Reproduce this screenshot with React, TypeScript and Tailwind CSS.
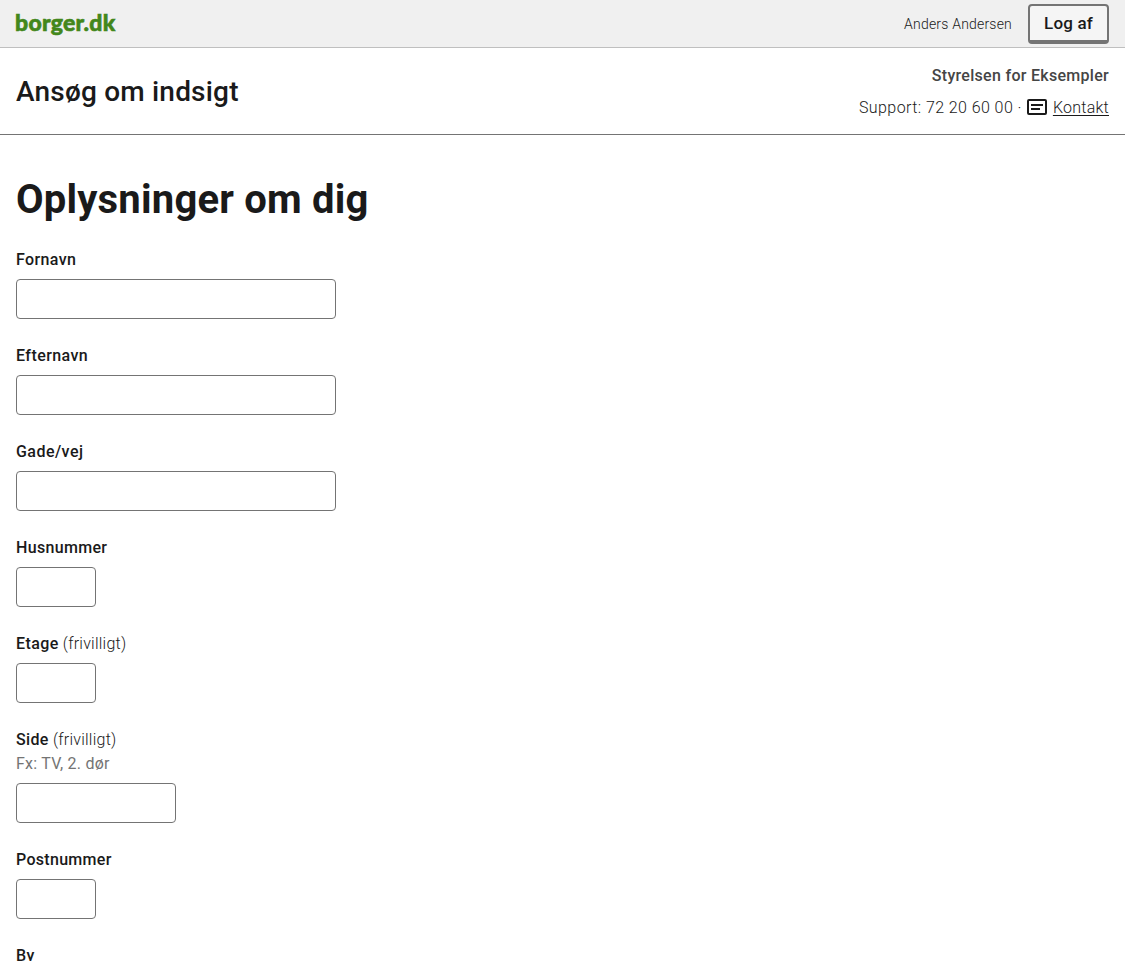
type FieldProps = {
  id: string;
  label: string;
  width: string;
  tracking: string;
  optional?: boolean;
  hint?: string;
};

function Field({ id, label, width, tracking, optional, hint }: FieldProps) {
  return (
    <div className="flex flex-col">
      <label htmlFor={id} className="h-6 text-base leading-[26px] whitespace-nowrap">
        <span className={`font-medium ${tracking}`}>{label}</span>
        {optional && <span className="font-light tracking-[0.24px]"> (frivilligt)</span>}
      </label>
      {hint && (
        <span className="h-6 text-base leading-[26px] tracking-[0.25px] text-[#747474]">{hint}</span>
      )}
      <input
        id={id}
        className={`mt-2 h-10 rounded-[4px] border border-[#747474] bg-white px-2 ${width}`}
      />
    </div>
  );
}

function MessageIcon() {
  return (
    <svg className="mb-[3px] ml-[5px] mr-1.5" width="20" height="16" viewBox="0 0 20 16" fill="none" stroke="#1a1a1a" strokeWidth="2">
      <rect x="1" y="1" width="18" height="14" rx="1" />
      <path d="M4 6h12M4 10h9" />
    </svg>
  );
}

export default function App() {
  return (
    <div className="h-[961px] overflow-hidden bg-white font-[Roboto,sans-serif] text-[#1a1a1a]">
      <header className="flex h-12 items-center justify-between border-b border-[#bfbfbf] bg-[#f0f0f0] px-4">
        <span className="-ml-px pb-0.5 font-['Lato_Black',Lato,sans-serif] text-[23px] font-black leading-none tracking-[0.25px] text-[#43871b] [-webkit-text-stroke:0.6px_#43871b]">
          borger.dk
        </span>
        <div className="flex items-center gap-4">
          <span className="text-sm font-light tracking-[0.2px]">Anders Andersen</span>
          <button className="h-10 w-[81px] rounded-[4px] border-2 border-b-4 border-[#747474] bg-[#f5f5f5] pt-0.5 text-[17px] font-medium leading-none tracking-[0.15px]">
            Log af
          </button>
        </div>
      </header>
      <div className="flex h-[87px] items-center justify-between border-b border-[#747474] px-4 pt-0.5">
        <span className="text-[28px] font-medium leading-8 tracking-[0.2px]">Ansøg om indsigt</span>
        <div className="flex flex-col items-end gap-2">
          <span className="text-base font-medium leading-6 tracking-[0.29px] text-[#454545]">
            Styrelsen for Eksempler
          </span>
          <div className="flex items-center text-base font-light leading-6">
            <span className="tracking-[0.42px]">Support: 72 20 60 00 ·</span>
            <MessageIcon />
            <a href="#kontakt" className="tracking-[0.25px] underline underline-offset-2">Kontakt</a>
          </div>
        </div>
      </div>
      <main className="px-4 pt-10">
        <h1 className="h-12 text-[40px] font-bold leading-[50px] tracking-[0.2px]">Oplysninger om dig</h1>
        <form className="mt-6 flex flex-col items-start gap-6">
          <Field id="fornavn" label="Fornavn" width="w-80" tracking="tracking-[0.37px]" />
          <Field id="efternavn" label="Efternavn" width="w-80" tracking="tracking-[0.42px]" />
          <Field id="gade" label="Gade/vej" width="w-80" tracking="tracking-[0.45px]" />
          <Field id="husnummer" label="Husnummer" width="w-20" tracking="tracking-[0.33px]" />
          <Field id="etage" label="Etage" width="w-20" tracking="tracking-[0.4px]" optional />
          <Field id="side" label="Side" width="w-40" tracking="tracking-[0.35px]" optional hint="Fx: TV, 2. dør" />
          <Field id="postnummer" label="Postnummer" width="w-20" tracking="tracking-[0.3px]" />
          <Field id="by" label="By" width="w-80" tracking="tracking-[0.4px]" />
        </form>
      </main>
    </div>
  );
}
